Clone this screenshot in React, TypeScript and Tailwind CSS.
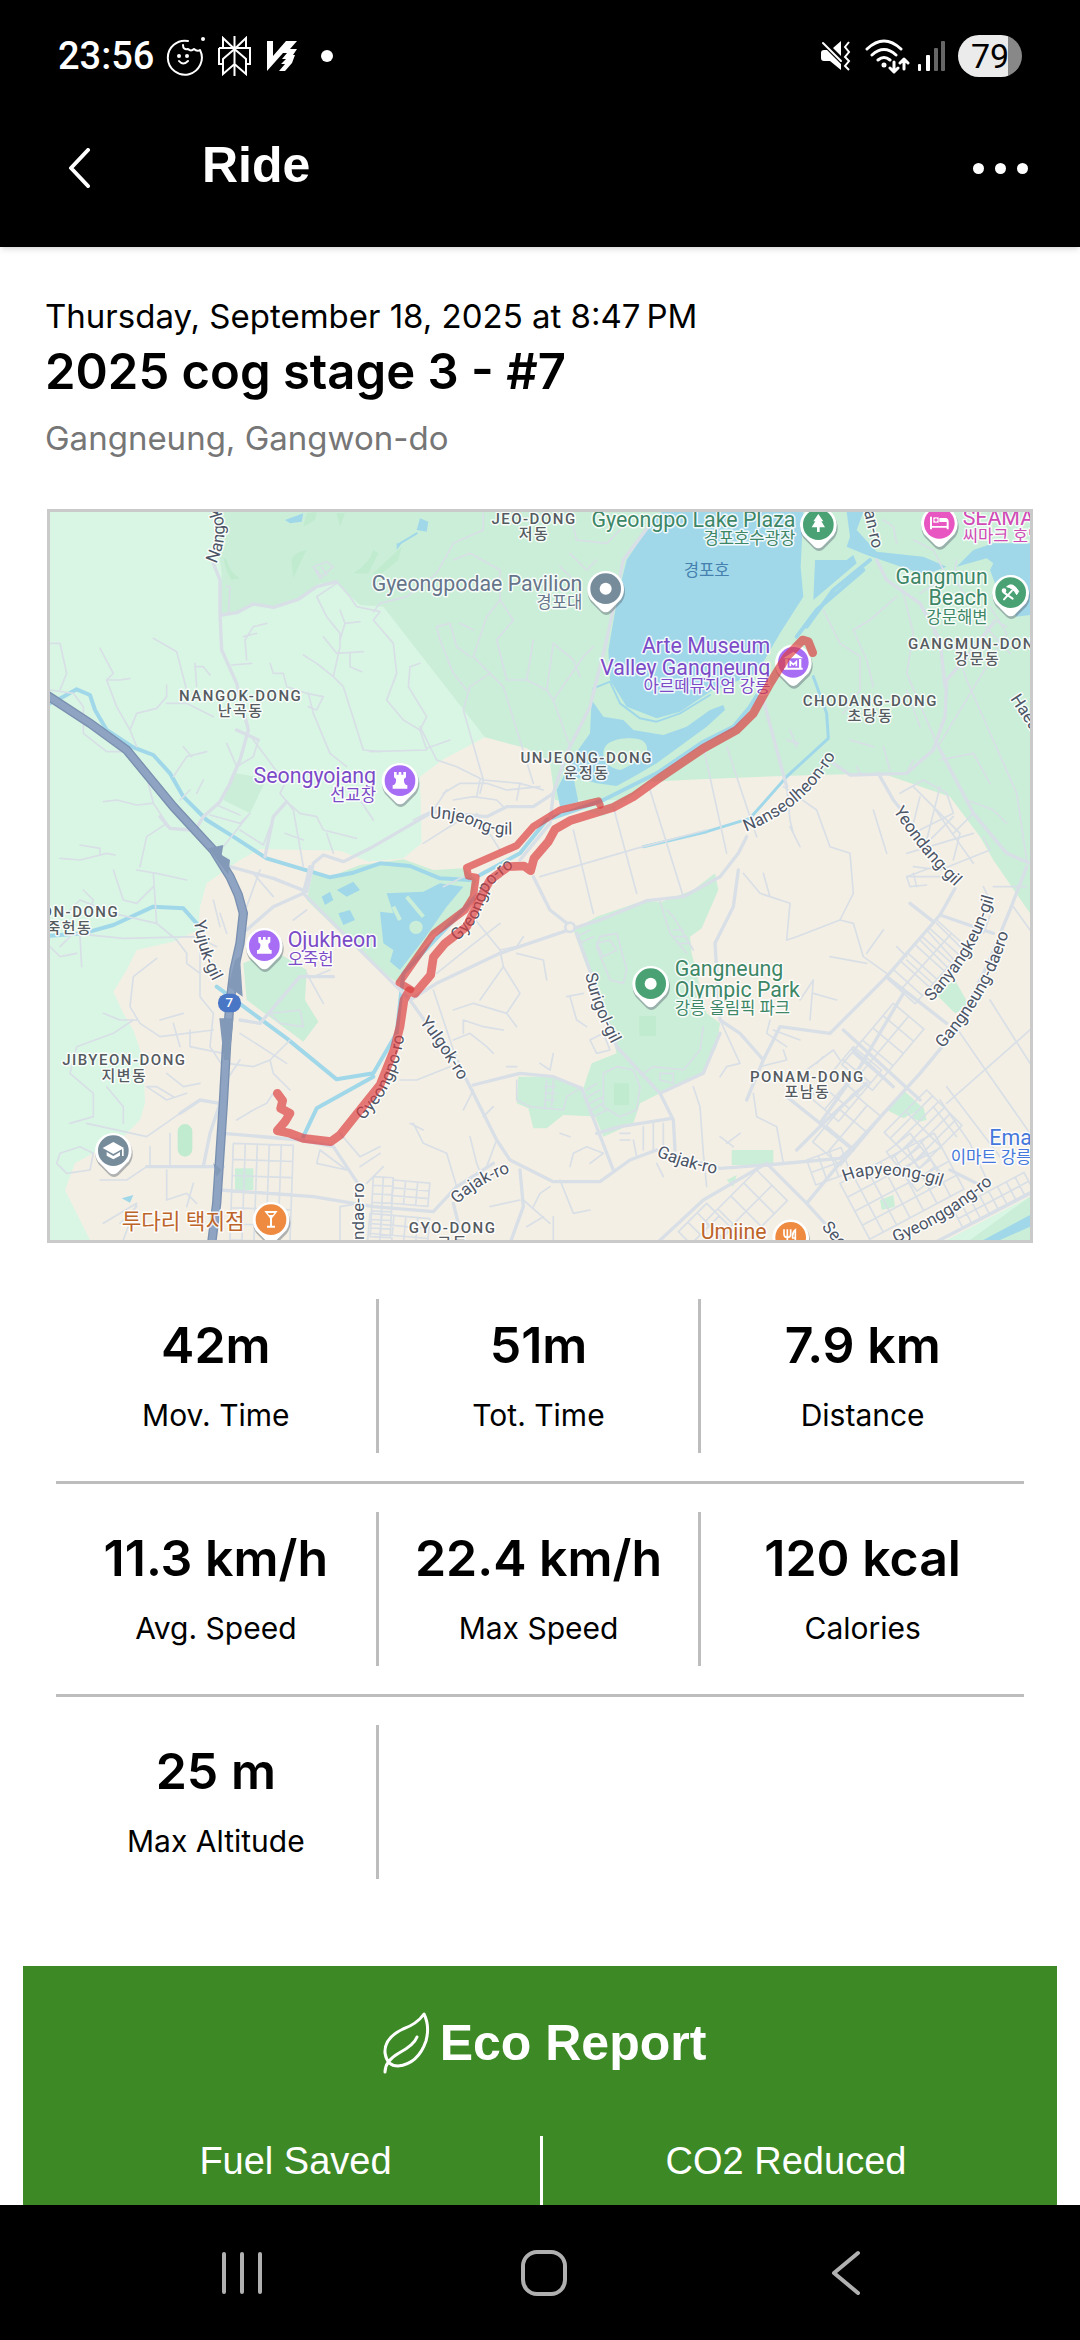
import type { ReactNode } from 'react'

const STATS = [
  [
    { value: '42m', label: 'Mov. Time' },
    { value: '51m', label: 'Tot. Time' },
    { value: '7.9 km', label: 'Distance' },
  ],
  [
    { value: '11.3 km/h', label: 'Avg. Speed' },
    { value: '22.4 km/h', label: 'Max Speed' },
    { value: '120 kcal', label: 'Calories' },
  ],
  [{ value: '25 m', label: 'Max Altitude' }],
]

// ---------- map data (map units) ----------

const ROUTE_OUT =
  'M712 1780L728 1802 722 1825 750 1840 735 1865 712 1892 750 1900 790 1915 872 1925 900 1905 1020 1755 1062 1650 1080 1580 1092 1500 1108 1472 1125 1480 1172 1425 1180 1372 1215 1330 1280 1280 1318 1200 1350 1140 1405 1100 1452 1098 1472 1112 1482 1075 1525 1025 1545 988 1590 962 1720 922 1780 890 1850 840 1990 745 2090 690 2140 640 2190 550 2240 470 2288 420 2305 425 2318 458'
const ROUTE_BACK =
  'M1680 915L1675 903 1560 930 1480 980 1430 1037 1280 1103 1285 1128 1308 1132 1300 1190 1275 1230 1180 1302 1078 1448 1112 1468'

const HIGHWAY =
  'M20 585L150 670 260 750 400 920 520 1050 570 1130 595 1185 610 1240 600 1330 582 1410 570 1510 560 1630 550 1810 540 1960 530 2110 515 2230'

const MAJOR_ROADS = [
  'M520 190L540 240 540 345 545 450 590 550 625 690 600 780 570 850 540 905 490 950 460 1000',
  'M545 345L590 338 640 312 700 322 775 298 830 260 890 245',
  'M360 950L390 985 450 990M590 690L655 720M675 1070L700 950 740 905',
  'M570 1100L700 1135 800 1175 820 1090 850 1065 910 1085 990 1045 1180 935',
  'M1840 60L1750 180 1700 420 1650 620 1580 760 1540 880 1530 970 1440 1080',
  'M1180 935L1340 950 1400 920 1480 920 1540 880',
  'M1480 1130L1530 1230 1600 1285 1380 1360 1190 1450 1110 1500',
  'M1600 1285L1680 1260 1820 1202 1930 1190 2040 1130 2095 1060 2120 1010',
  'M1610 1300L1730 1640 1860 1780 1900 1860 1905 1950',
  'M1110 1500L1280 1740 1370 1920 1410 1980 1540 2045 1680 2045 1770 1980 1850 1950 2040 2005 2180 1995 2400 1975 2440 1940',
  'M1300 1755L1440 1720 1540 1730 1625 1765 1720 2010M1670 1900L1740 1880 1895 1855M1860 1780L1990 1720 2040 1600',
  'M2170 600L2240 860M2380 790L2430 825 2600 820 2680 750 2715 650 2720 540 2790 460 2860 370',
  'M2510 180L2540 240 2640 310 2700 420 2715 560M2515 820L2560 900 2600 950M2690 730L2800 940 2900 1060 2970 1090',
  'M2095 1110L2080 1220 2025 1330 2040 1560 2100 1600 2170 1680 2120 1800M2170 1680L2220 1580 2370 1600 2540 1430 2700 1245 2745 1165',
  'M2540 1430L2720 1570M2410 1590L2640 1800M2340 1870L2460 1700 2590 1480M2240 1790L2440 1950M2440 1650L2560 1760',
  'M2440 1940L2640 1720 2740 1600 2840 1400 2910 1230 2960 1100M2270 1950L2360 1860 2480 1750',
  'M1850 2230L1990 2100 2180 1990 2300 2110 2400 2220M2300 2110L2440 1940M2610 1210L2680 1265M2700 1245L2860 1300',
  'M790 1180L700 1220 620 1290M810 1100L790 1180 1010 1400 1100 1490M600 1560L660 1570 780 1430 880 1430',
  'M550 1900L780 1920 880 1940 960 2060M320 2000L550 2000M540 2070L820 2090 1000 2120 1180 2135 1250 2060 1360 1990',
  'M490 2000L510 1900 540 1810 480 1800 420 1840M1440 2010L1450 2120 1410 2230M1240 2110L1260 2190',
  'M2680 2230L2970 2080M2730 2010L2830 2060',
]

const MINOR_ROADS = [
  'M30 430L60 430 80 520 60 570M180 445L220 520 200 540 240 540 270 535M200 540L230 620 270 690 290 740M270 690L290 640 350 625 380 590 380 555',
  'M340 415L410 455 440 570M465 490L470 560M465 500L490 500 510 525M380 610L440 610 520 650M30 570L100 580 130 620 130 700 200 755 260 755',
  'M560 260L570 260 565 340M575 495L635 490M620 480L615 420 640 380 680 370M610 410L650 400M690 490L700 520 730 520 740 560 800 580 850 590 830 630 805 620',
  'M890 250L830 290 860 350 900 400 900 440 880 530 910 560 970 750 1020 755M850 410L890 460 970 455M790 465L830 490 880 530M900 330L915 370 960 365M915 370L900 420',
  'M805 580L820 640 870 760 920 800M930 460L930 500 965 515M640 720L700 800 735 850 720 880 760 930 790 1100M590 800L640 770 655 720M560 730L590 800 570 840',
  'M400 830L440 770 500 755M430 740L455 770M190 905L230 900 290 915 335 910M320 830L340 910 380 970 320 1010 300 1100M60 1075L120 1080 200 1060 225 1065M120 1035L180 1045 180 1060',
  'M420 900L450 870M470 880L490 840M510 945L600 970 630 940 550 1040M530 915L600 945M600 990L670 1035 690 980',
  'M740 905L780 940 830 950 850 990 950 1015M860 1000L880 1060M735 1000L790 1020M1000 960L960 900',
  'M890 245L930 290 950 320 1020 335 1000 360 1060 430 1070 520 1040 600 1090 660 1140 690 1160 650 1105 560 1110 500 1140 490',
  'M1140 680L1190 780 1250 800 1330 840 1440 850 1510 870M1140 690L1160 750 990 755M1160 745L1230 720M1270 630L1330 840 1320 880M1270 630L1290 560 1350 520 1390 560 1480 850',
  'M1000 335L1020 310 1100 290 1190 220 1240 130 1330 90 1330 40M1240 180L1290 160 1380 210 1380 300 1340 350 1300 470 1350 520M1190 380L1230 370 1250 440 1290 470M1380 300L1420 360 1370 420 1400 540 1460 540 1520 570 1540 600 1590 740',
  'M1190 380L1200 420 1240 520 1280 570M1460 540L1480 420M1540 600L1630 470 1660 440M1520 570L1540 430 1600 480 1620 530M1590 160L1640 210 1670 180M1590 40L1610 120 1700 130 1750 80M1260 370L1300 390M1600 240L1560 200',
  'M1210 880L1260 850 1340 850 1400 870 1500 860M1240 900L1300 890 1370 900 1390 920M1320 840L1310 890M1440 850L1430 900M1220 870L1180 930 1120 960M1310 940L1380 1050M1150 1030L1260 960',
  'M1830 870L1930 1190M1720 920L1790 1180M1600 990L1660 1240M1990 740L2060 1060M2060 740L2150 1010M2230 860L2330 930 2370 1040 2430 1060 2440 1180 2400 1260 2270 1310 2240 1320',
  'M1500 1130L1790 1045 2000 990M2250 980L2280 1040M2240 860L2250 960 2260 1000M2350 330L2400 430 2460 470 2460 570 2410 640M2570 290L2490 360 2440 390 2480 480 2500 560M2590 280L2620 400 2600 520 2690 730',
  'M2620 120L2680 150 2720 230 2640 280M2750 180L2740 230 2790 310M2530 60L2560 80 2570 130M2680 400L2750 450 2780 540 2930 880 2960 1080M2800 340L2910 460M2850 320L2900 400 2700 730M2860 360L2900 380',
  'M2700 780L2800 760 2850 850M2600 820L2620 780M2530 740L2550 810M2450 800L2460 820M2430 720L2500 740M2600 570L2640 680M2150 560L2190 660M2260 720L2270 740',
  'M2580 880L2650 840 2720 880 2740 940 2620 1000 2650 1040 2740 950M2620 860L2760 1000 2740 1080M2600 1060L2800 1000M2680 920L2800 1090M2620 1100L2700 1110 2850 1050 2830 1010M2600 1130L2680 1100M2780 900L2860 930 2900 970M2640 890L2620 970M2700 860L2660 1020M2800 940L2740 1000',
  'M2500 930L2540 1060M2110 1120L2160 1180 2250 1210 2240 1320M2170 1120L2190 1190M2400 1260L2440 1270 2470 1370 2540 1420M2370 1370L2480 1390M2480 1360L2530 1290M2280 1500L2320 1440 2310 1560M2320 1480L2390 1500M2570 1340L2600 1370',
  'M2640 1320L2740 1420M2660 1290L2760 1400M2690 1270L2790 1370M2600 1380L2700 1470M2730 1130L2600 1130 2610 1160 2660 1155M2620 1120L2630 1160M2860 1160L2960 1160M2920 1220L2970 1290M2830 1160L2860 1220 2830 1300',
  'M2740 1570L2830 1700 2970 1900M2850 1500L2970 1690M2720 1810L2970 1590M2720 1760L2880 1970M2700 1800L2790 1930 2850 2060M2680 1820L2750 1910',
  'M80 1240L120 1200 220 1240 350 1270 410 1320 440 1360 440 1390 480 1420M130 1170L160 1200 150 1230M220 1110L250 1200 290 1210 340 1160M290 1110L350 1120 440 1140M340 1120L350 1270M60 1340L100 1300 250 1315 470 1310 530 1340M120 1310L125 1400',
  'M30 1340L60 1370 110 1360M350 1375L280 1430 270 1520 300 1570 360 1610 520 1590M280 1560L220 1600 110 1640 90 1720 160 1780 160 1850 90 1870M190 1540L240 1560 290 1560M480 1270L480 1490 520 1540M400 1570L420 1640M360 1560L430 1540M450 1590L450 1640 550 1660',
  'M320 1760L380 1800 440 1780M320 1760L350 1760 400 1790M380 1720L430 1760 480 1750M200 1760L250 1820 250 1870M140 1870L320 1910 420 1840M590 1860L640 1830 680 1810 700 1780M560 1690L640 1700 690 1680 750 1620M690 1680L700 1720 750 1770M600 1680L560 1740M600 1600L740 1690',
  'M620 1220L660 1110M700 1190L640 1120M760 1260L800 1230M540 1240L560 1300M520 1200L540 1280M520 1540L510 1640 550 1700M690 1540L780 1530 790 1580 720 1570 690 1540M800 1420L850 1510M820 1430L870 1410',
  'M60 1960L120 1940 160 1960 150 2010 80 2020 50 1990 60 1960M330 1940L330 2000M390 1900L390 2000M180 2040L260 2040 320 2000M380 2010L380 2100M380 2100L440 2080 470 2110M190 2170L290 2110 250 2220M290 2120L240 2170M460 2050L440 2120',
  'M840 1950L920 2010 830 1990 840 1950M900 1900L960 1970 1020 1940M960 2000L1020 1960M980 2050L1030 2000M900 2220L900 2120 960 2110',
  'M1180 1470L1240 1650 1280 1740M1190 1420L1290 1340 1380 1270M1290 1240L1380 1350 1390 1400 1320 1500M1380 1350L1430 1340 1450 1310M1430 1360L1510 1380 1520 1440M1390 1400L1440 1480 1400 1540 1430 1580M1240 1530L1300 1510 1400 1540M1240 1620L1290 1600 1340 1640 1360 1660M1270 1600L1270 1560 1330 1580 1390 1590',
  'M1590 1490L1610 1560 1640 1580M1580 1490L1630 1480M1650 1620L1690 1600 1710 1650 1670 1660 1650 1620M1540 1660L1530 1710 1500 1690M1080 1740L1130 1740 1230 1700M1120 1870L1150 1930 1220 1960 1250 2060M1290 1910L1310 1990 1330 2040M1110 1870L1150 1890M1370 1920L1340 2000',
  'M1560 1900L1590 1910M1400 1700L1430 1700M1270 1830L1300 1770M1330 1850L1360 1820M1560 2040L1600 2140 1650 2130M1590 2000L1600 1960 1640 1940 1690 1960 1650 1990M1450 2100L1530 2170M1480 2120L1500 2080 1530 2060M1460 2180L1510 2150M1540 2150L1540 2220M1350 2120L1440 2100',
  'M1960 1760L1980 1820 1990 1960 2000 2060M1850 1990L1870 2030M1780 1920L1790 1970M1840 1870L1840 1950M1810 1880L1810 1950M1870 1870L1870 1950M1740 1900L1770 1900M1740 1920L1770 1920',
  'M2040 1560L2100 1690 2060 1700 2040 1730M2190 1560L2180 1600 2240 1640M2160 1700L2240 1680 2230 1650M2140 1780L2150 1850 2210 1880 2230 1990M2040 1910L2080 1940M2060 1930L2100 1900M2300 1710L2380 1650 2400 1680M2330 1690L2350 1670M2200 1590L2280 1620',
]

// park paths and car parks inside the green areas
const PARK_PATHS = [
  'M1680 1310L1730 1300 1760 1410 1750 1450 1710 1440 1670 1340ZM1670 1330L1710 1320 1730 1350 1690 1370Z',
  'M1860 1205L1890 1300 1940 1360M1880 1230L1900 1250 1960 1350M1900 1290L1930 1290M1905 1310L1940 1310M1912 1330L1950 1330',
  'M1690 1720L1730 1700 1780 1710 1800 1760 1790 1830 1740 1850 1690 1820ZM1640 1770L1670 1750M1645 1790L1680 1770M1650 1810L1690 1790M1655 1830L1690 1810M1660 1850L1700 1830',
  'M1430 1740L1430 1800 1470 1820 1570 1830M1570 1830L1580 1790 1620 1765M1520 1740L1515 1820M1540 1740L1535 1820M1515 1760L1545 1760M1515 1780L1545 1780M1515 1800L1545 1800',
  'M1810 1720L1840 1700 1930 1710 1980 1650 1990 1580M1860 1720L1900 1720 1900 1750 1860 1740ZM2250 690L2270 740M2240 720L2275 730M820 200L860 185 880 200 840 235ZM830 210L845 230M845 200L860 225',
  'M1210 1160L1270 1130M1600 1290L1640 1270M1610 1310L1650 1290M1620 1330L1660 1310',
]

// dense street grids: origin, size, cell counts and rotation in degrees
const BLOCKS = [
  { x: 580, y: 1930, w: 180, h: 290, cols: 5, rows: 6, angle: 2 },
  { x: 1000, y: 2030, w: 60, h: 180, cols: 2, rows: 7, angle: 3 },
  { x: 1060, y: 2040, w: 110, h: 70, cols: 3, rows: 3, angle: 5 },
  { x: 990, y: 2140, w: 180, h: 90, cols: 5, rows: 3, angle: 5 },
  { x: 2690, y: 1260, w: 120, h: 230, cols: 2, rows: 7, angle: 42 },
  { x: 2560, y: 1510, w: 120, h: 240, cols: 2, rows: 5, angle: 40 },
  { x: 2440, y: 1640, w: 110, h: 200, cols: 2, rows: 4, angle: 40 },
  { x: 2440, y: 1780, w: 110, h: 190, cols: 2, rows: 3, angle: 40 },
  { x: 2660, y: 1770, w: 150, h: 180, cols: 6, rows: 2, angle: 45 },
  { x: 2610, y: 1900, w: 150, h: 90, cols: 6, rows: 1, angle: 52 },
  { x: 2400, y: 2050, w: 320, h: 190, cols: 7, rows: 4, angle: -28 },
  { x: 2150, y: 2010, w: 130, h: 220, cols: 2, rows: 4, angle: 45 },
  { x: 2000, y: 2110, w: 160, h: 120, cols: 3, rows: 3, angle: 45 },
  { x: 2300, y: 1980, w: 110, h: 80, cols: 3, rows: 2, angle: -20 },
  { x: 2740, y: 2130, w: 240, h: 60, cols: 8, rows: 2, angle: -28 },
]

type Poi = { lines: string[]; local: string; x: number; y: number; anchor: 'start' | 'end'; color: string }

const POIS: Poi[] = [
  { lines: ['Gyeongpo Lake Plaza'], local: '경포호수광장', x: 2266, y: 80, anchor: 'end', color: '#3d8767' },
  { lines: ['Gyeongpodae Pavilion'], local: '경포대', x: 1627, y: 272, anchor: 'end', color: '#66758a' },
  { lines: ['SEAMARQ'], local: '씨마크 호텔', x: 2768, y: 75, anchor: 'start', color: '#d04bb5' },
  { lines: ['Gangmun', 'Beach'], local: '강문해변', x: 2843, y: 252, anchor: 'end', color: '#3d8767' },
  { lines: ['Arte Museum', 'Valley Gangneung'], local: '아르떼뮤지엄 강릉', x: 2191, y: 460, anchor: 'end', color: '#7b4bc8' },
  { lines: ['Seongyojang'], local: '선교장', x: 1008, y: 850, anchor: 'end', color: '#7b4bc8' },
  { lines: ['Ojukheon'], local: '오죽헌', x: 743, y: 1342, anchor: 'start', color: '#7b4bc8' },
  { lines: ['Gangneung', 'Olympic Park'], local: '강릉 올림픽 파크', x: 1904, y: 1427, anchor: 'start', color: '#3d8767' },
]

const DISTRICTS = [
  { name: 'JEO-DONG', local: '저동', x: 1482, y: 71 },
  { name: 'NANGOK-DONG', local: '난곡동', x: 602, y: 602 },
  { name: 'UNJEONG-DONG', local: '운정동', x: 1640, y: 788 },
  { name: 'CHODANG-DONG', local: '초당동', x: 2491, y: 618 },
  { name: 'GANGMUN-DONG', local: '강문동', x: 2812, y: 446 },
  { name: 'HEON-DONG', local: '죽헌동', x: 88, y: 1252 },
  { name: 'JIBYEON-DONG', local: '지변동', x: 253, y: 1696 },
  { name: 'PONAM-DONG', local: '포남동', x: 2302, y: 1746 },
  { name: 'GYO-DONG', local: '교동', x: 1238, y: 2198 },
]

const STREETS = [
  { id: 'nangok', name: 'Nangok-gil', d: 'M528 192Q562 120 550 60Q540 10 500 -80' },
  { id: 'haean', name: 'an-ro', d: 'M2472 34L2502 170' },
  { id: 'haes', name: 'Haean-ro', d: 'M2910 596L3030 780' },
  { id: 'unjeong', name: 'Unjeong-gil', d: 'M1170 956Q1240 955 1290 975Q1350 1010 1440 1002' },
  { id: 'nanseol', name: 'Nanseolheon-ro', d: 'M2118 995Q2290 930 2385 770L2420 700' },
  { id: 'yeondang', name: 'Yeondang-gil', d: 'M2560 932Q2650 1080 2800 1210' },
  { id: 'yujuk', name: 'Yujuk-gil', d: 'M462 1262Q475 1380 545 1490' },
  { id: 'gyeongpo1', name: 'Gyeongpo-ro', d: 'M1250 1324Q1322 1270 1340 1180Q1370 1125 1460 1080' },
  { id: 'gyeongpo2', name: 'Gyeongpo-ro', d: 'M968 1862Q1085 1750 1096 1570' },
  { id: 'surigol', name: 'Surigol-gil', d: 'M1636 1422Q1655 1530 1740 1680' },
  { id: 'yulgok', name: 'Yulgok-ro', d: 'M1138 1566Q1200 1640 1280 1780' },
  { id: 'gajak1', name: 'Gajak-ro', d: 'M1252 2114Q1310 2050 1430 2010' },
  { id: 'gajak2', name: 'Gajak-ro', d: 'M1848 1968Q1930 2005 2060 2028' },
  { id: 'ndae', name: 'ndae-ro', d: 'M973 2220L973 2000' },
  { id: 'sanyang', name: 'Sanyangkeun-gil', d: 'M2674 1506Q2830 1350 2872 1150' },
  { id: 'daero', name: 'Gangneung-daero', d: 'M2708 1646Q2876 1460 2920 1240' },
  { id: 'hapyeong', name: 'Hapyeong-gil', d: 'M2414 2046Q2540 1990 2760 2080' },
  { id: 'gyeonggang', name: 'Gyeonggang-ro', d: 'M2566 2228Q2740 2160 2890 2022' },
  { id: 'seobu', name: 'Seobu-ro', d: 'M2344 2182L2460 2320' },
]

// ---------- map pieces ----------

function Grid({ x, y, w, h, cols, rows, angle }: (typeof BLOCKS)[number]) {
  const d = [
    ...Array.from({ length: cols + 1 }, (_, i) => `M${(i * w) / cols} 0V${h}`),
    ...Array.from({ length: rows + 1 }, (_, i) => `M0 ${(i * h) / rows}H${w}`),
  ].join('')
  return <path d={d} transform={`translate(${x} ${y}) rotate(${angle})`} />
}

function Pin({ x, y, color, children }: { x: number; y: number; color: string; children?: ReactNode }) {
  return (
    <g transform={`translate(${x} ${y})`}>
      <path d="M-46 36A56 56 0 1 1 46 36L14 68Q0 80 -14 68Z" fill="#5b6673" opacity=".45" transform="translate(2 5)" />
      <path d="M-46 32A55 55 0 1 1 46 32L12 66Q0 76 -12 66Z" fill="#fff" />
      <circle r="46" fill={color} />
      {children}
    </g>
  )
}

function Castle() {
  return (
    <path
      d="M-18 -26V-10L-12 -5V2Q-12 8 -18 13H-22V24H22V13H18Q12 8 12 2V-5L18 -10V-26H10V-18H4V-26H-4V-18H-10V-26Z"
      fill="#fff"
    />
  )
}

function RouteMap() {
  return (
    <svg viewBox="30 36 2940 2184" className="block h-auto w-full" role="img" aria-label="Map of the ride">
      <rect x="30" y="36" width="2940" height="2184" fill="#d9f6e4" />

      {/* Land cover */}
      <path
        d="M520 36L545 220 540 345 590 338 640 312 700 322 775 298 840 250 890 250 960 315 1030 320 1335 712 1500 900 2000 900 2900 1140 2970 1250V36Z"
        fill="#cbeed8"
      />
      <path
        d="M600 1080L660 1047 900 1052 985 1085 1090 1075 1145 1030 1140 830 1210 778 1335 712 1460 745 1530 790 1545 900 1690 950 1830 845 1980 838 2230 828 2525 820 2730 890 2820 1010 2860 1080 2970 1240V2090L2720 2220H150L75 2070 105 1990 250 1910 300 1860 315 1810 310 1680 280 1590 250 1540 220 1475 260 1410 290 1350 400 1325 475 1290 480 1220 500 1150Z"
        fill="#f4efe4"
      />
      <path d="M585 820L680 835 630 940 550 900Z" fill="#cbeed8" />
      <path
        d="M820 1110L800 1200 1010 1405 1075 1450 1170 1310 1280 1230 1310 1140 1270 1105 1180 1110 1090 1078 960 1095 870 1130ZM610 1390L700 1350 800 1410 795 1500 835 1565 790 1625 620 1500Z"
        fill="#cbeed8"
      />
      <path
        d="M1600 1290L1670 1250 1810 1202 1865 1205 1960 1170 2025 1120 2035 1170 1985 1285 1950 1310 1955 1360 2000 1540 2040 1570 2030 1640 1985 1720 1860 1780 1800 1810 1780 1870 1690 1910 1630 1765 1655 1690 1730 1660 1690 1500 1640 1400ZM1435 1730L1550 1730 1625 1765 1685 1850 1570 1845 1520 1885 1480 1885 1465 1825 1430 1810Z"
        fill="#cbeed8"
      />
      <path
        d="M2685 1480L2745 1440 2790 1520 2745 1540ZM2540 1830L2590 1770 2650 1825 2590 1855ZM2610 1850L2650 1820 2660 1860 2640 1865ZM2075 1950H2200V1995H2075ZM585 2005H640V2070H585ZM2520 2100L2560 2085 2565 2120 2525 2130ZM2060 2040L2090 2025 2080 2060ZM2790 2220L2970 2090V2220Z"
        fill="#cbeed8"
      />
      <path
        d="M560 180Q570 220 600 235L575 240Q555 210 550 170ZM755 190Q750 160 800 150L775 200 760 235ZM800 40L790 80 825 60 830 36ZM940 220Q990 190 1000 150L1015 160 985 220ZM890 40L900 80 915 40ZM1000 220L1085 140 1075 180 1020 225ZM435 1872a22 22 0 0 1 22 22v54a22 22 0 0 1 -44 0v-54a22 22 0 0 1 22 -22ZM1798 1548h50v60h-50ZM1722 1750h45v65h-45Z"
        fill="#c0ebcf"
      />

      {/* Water */}
      <g fill="#a0d8ea">
        <path d="M1865 36L1810 105 1760 180 1735 280 1705 450 1710 540 1760 620 1850 655 1920 635 2010 575 2150 520 2220 400 2290 290 2282 200 2290 36Z" />
        <path d="M2325 180L2420 180 2440 165 2450 190 2320 300ZM2420 36L2430 110 2420 140 2480 165 2640 220 2680 215 2720 200 2650 170 2510 155 2450 90 2470 36ZM2750 200L2800 150 2860 130 2970 130V345L2930 350 2880 290 2850 210 2860 190 2840 175Z" />
        <path d="M1655 600L1690 650 1750 660 1780 690 1870 705 1940 680 2010 630 2050 615 2055 630 2000 680 1850 790 1790 825 1730 858 1670 850 1600 830 1615 905 1560 920 1550 870 1600 770 1650 700Z" />
        <path d="M1020 1235L1060 1240 1040 1180 1150 1175 1200 1150 1270 1160 1220 1220 1150 1320 1080 1410 1050 1385 1060 1350 1030 1330ZM890 1170L940 1145 960 1170 920 1190ZM845 1190L870 1175 880 1200 855 1215ZM895 1240L930 1230 945 1260 910 1275Z" />
        <path d="M735 60L790 40 785 65 750 70ZM1140 55L1165 65 1160 95 1130 90ZM1070 130L1085 130 1070 150ZM245 2095L280 2085 270 2108Z" />
        <path d="M2830 2220L2970 2145V2180L2880 2220Z" />
      </g>
      <path d="M1690 760Q1690 720 1760 715Q1830 710 1820 760Q1770 800 1740 810Q1690 800 1690 760Z" fill="#cbeed8" />
      <g fill="none" stroke="#cbeed8" strokeWidth="12">
        <path d="M1100 1190L1150 1250M1060 1220L1080 1260M2320 160L2310 300 2260 400" />
        <circle cx="1128" cy="1282" r="14" fill="#cbeed8" />
      </g>
      <g fill="none" stroke="#a0d8ea" strokeWidth="12" strokeLinejoin="round" strokeLinecap="round">
        <path d="M30 610L70 590 110 568 150 585 165 630 200 690 280 742 340 765 390 820 430 890 500 960 580 1010 680 1075 780 1105 870 1132 940 1118 1020 1090 1110 1098 1200 1135 1290 1140" />
        <path d="M1320 1125L1440 1060 1520 960 1690 900 1850 820 1990 725 2080 680 2130 620 2180 540M1400 1090L1260 1240 1090 1420 1070 1600 1000 1720 890 1738 740 1615 530 1460M1000 1730L830 1825 790 1910M30 1307L130 1300 220 1275 340 1220 430 1225 470 1270" />
        <path d="M1810 1040L2000 995 2130 955 2240 830 2365 715 2360 640 2320 530" strokeWidth="9" />
        <path d="M2470 210L2330 330 2270 410M2490 180L2380 270 2300 380" />
        <path d="M1660 565L1710 545 1740 610 1800 655 1850 665 1920 640 2010 585M1130 100L1080 130" strokeWidth="6" />
      </g>

      {/* Roads */}
      <g fill="none" stroke="#d8dfe6" strokeLinejoin="round" strokeLinecap="round">
        <g strokeWidth="5">
          {MINOR_ROADS.map(d => <path key={d} d={d} />)}
          {PARK_PATHS.map(d => <path key={d} d={d} />)}
          {BLOCKS.map(b => <Grid key={`${b.x}-${b.y}`} {...b} />)}
        </g>
        <g strokeWidth="10">
          {MAJOR_ROADS.map(d => <path key={d} d={d} />)}
        </g>
        <circle cx="1590" cy="1282" r="14" strokeWidth="8" fill="#f4efe4" />
      </g>
      <path d={HIGHWAY} fill="none" stroke="#7a90b0" strokeWidth="28" />
      <path d={HIGHWAY} fill="none" stroke="#8ea4c2" strokeWidth="20" />
      <path
        d="M505 1045L550 1035 545 1065 570 1080 565 1125ZM565 1460L585 1380 600 1370 608 1490ZM538 1555H580L568 1680H552ZM520 1990L545 2010 530 2030Z"
        fill="#8399b8"
      />

      {/* Labels */}
      <g stroke="#fff" strokeOpacity=".85" strokeWidth="9" strokeLinejoin="round" className="[font-family:Roboto,'Noto_Sans_CJK_KR',sans-serif] [paint-order:stroke]">
        {STREETS.map(s => (
          <g key={s.id}>
            <path id={s.id} d={s.d} fill="none" stroke="none" />
            <text fill="#4c5566" className="text-[51px]">
              <textPath href={`#${s.id}`}>{s.name}</textPath>
            </text>
          </g>
        ))}
        {DISTRICTS.map(d => (
          <g key={d.name} fill="#555b61" textAnchor="middle">
            <text x={d.x} y={d.y} className="text-[45px] font-medium tracking-widest">{d.name}</text>
            <text x={d.x} y={d.y + 46} className="text-[45px] font-medium tracking-widest">{d.local}</text>
          </g>
        ))}
        {POIS.map(p => (
          <g key={p.local} fill={p.color} textAnchor={p.anchor}>
            {p.lines.map((line, i) => (
              <text key={line} x={p.x} y={p.y + i * 64} className="text-[64px]">{line}</text>
            ))}
            <text x={p.x} y={p.y + p.lines.length * 64 - 12} className="text-[50px]">{p.local}</text>
          </g>
        ))}
        <text x="2000" y="228" textAnchor="middle" fill="#4580ae" stroke="none" className="text-[50px]">경포호</text>
        <text x="2848" y="1936" fill="#4478dc" className="text-[64px]">Emart</text>
        <text x="2732" y="1990" fill="#4478dc" className="text-[50px]">이마트 강릉점</text>
        <text x="2180" y="2216" textAnchor="end" fill="#bd6429" className="text-[64px]">Umjine</text>
        <text x="614" y="2188" textAnchor="end" fill="#bd6429" className="text-[64px]">투다리 택지점</text>
      </g>

      <rect x="534" y="1481" width="69" height="56" rx="27" fill="#4a76c6" />
      <text x="568" y="1522" textAnchor="middle" fill="#fff" className="text-[40px] font-medium [font-family:Roboto,sans-serif]">7</text>

      {/* Pins */}
      <Pin x={1697} y={266} color="#778c9b"><circle r="18" fill="#fff" /></Pin>
      <Pin x={1832} y={1451} color="#4aa173"><circle r="18" fill="#fff" /></Pin>
      <Pin x={1080} y={842} color="#a86df5"><Castle /></Pin>
      <Pin x={673} y={1337} color="#a86df5"><Castle /></Pin>
      <Pin x={2335} y={74} color="#4aa173">
        <path d="M0 -32L15 -10H9L20 8H4V22H-4V8H-20L-9 -10H-15Z" fill="#fff" />
      </Pin>
      <Pin x={2698} y={70} color="#e756c1">
        <path d="M-28 -20H-22V8H22V-4H28V18H22V13H-22V18H-28ZM0 -16H20Q28 -14 28 -4H0Z" fill="#fff" />
        <path d="M-18 -18H-2V-2H-18Z" fill="#fff" />
        <path d="M-10 -15V-5M-15 -10H-5" stroke="#e756c1" strokeWidth="4" />
      </Pin>
      <Pin x={2912} y={278} color="#4aa173">
        <path d="M-12 -18Q6 -34 24 -4L18 6Q8 -14 -12 -18Z" fill="#fff" stroke="#fff" strokeWidth="3" strokeLinejoin="round" />
        <path d="M4 -6L-20 20M-20 0L6 18" fill="none" stroke="#fff" strokeWidth="6" strokeLinecap="round" />
        <circle cx="-20" cy="-6" r="7" fill="#fff" />
      </Pin>
      <Pin x={2260} y={487} color="#a86df5">
        <path d="M0 -32L30 -12H-30ZM-24 -10H-17V16H-24ZM17 -10H24V16H17ZM-28 16H28V22H-28Z" fill="#fff" />
        <path d="M-9 12V-2L0 7 9 -2V12" fill="none" stroke="#fff" strokeWidth="5" />
      </Pin>
      <Pin x={220} y={1952} color="#778c9b">
        <path d="M0 -26L32 -8 0 10 -32 -8ZM-20 4L0 16 20 4V15L0 26 -20 15ZM26 -6H31V16H26Z" fill="#fff" />
      </Pin>
      <Pin x={693} y={2159} color="#ee8b41">
        <path d="M-20 -26H20L3 -4V18H12V24H-12V18H-3V-4Z" fill="#fff" />
        <path d="M-10 -20H10L6 -14H-6Z" fill="#ee8b41" />
      </Pin>
      <Pin x={2252} y={2212} color="#ee8b41">
        <path d="M-20 -24V-10Q-20 0 -10 0T0 -10V-24M-10 -24V24M14 24V-22Q4 -14 6 2H14" fill="none" stroke="#fff" strokeWidth="5" />
      </Pin>

      {/* Recorded track */}
      <g fill="none" stroke="#dc3c3e" strokeOpacity=".68" strokeWidth="26" strokeLinejoin="round" strokeLinecap="round">
        <path d={ROUTE_OUT} />
        <path d={ROUTE_BACK} strokeWidth="22" />
      </g>
    </svg>
  )
}

// ---------- screen ----------

function StatusBar() {
  return (
    <div className="flex h-28 items-center justify-between pr-[58px] pl-[58px]">
      <div className="flex items-center gap-3">
        <span className="text-[38px] leading-none font-medium [font-family:Roboto,sans-serif]">23:56</span>
        <svg width="40" height="42" viewBox="0 0 40 42" fill="none" stroke="#fff" strokeWidth="2" strokeLinecap="round" strokeLinejoin="round">
          <path d="M22 6A17 17 0 1 0 34 15Q31 17 28 14Q25 17 22 14Q17 15 17 10" />
          <path d="M13 26Q17 31 22 26" />
          <circle cx="13" cy="21" r="1" fill="#fff" />
          <circle cx="21" cy="21" r="1" fill="#fff" />
          <circle cx="37" cy="4" r="2" fill="#fff" stroke="none" />
        </svg>
        <svg width="33" height="40" viewBox="0 0 33 40" fill="none" stroke="#fff" strokeWidth="2">
          <path d="M16.500 0V40M5 12V2L16.500 13 28 2V12M1 12H32V28H28M5 28H1V12M16.500 13L5 23V38L16.500 28 28 38V23L16.500 13" />
        </svg>
        <svg width="30" height="30" viewBox="0 0 30 30" fill="#fff" className="ml-1">
          <path d="M0 0H6V15L19 0H30L23 8H30L26 14H28L25 22 18 30H12L18 23H14L19 18H15L20 12H16L0 30Z" />
        </svg>
        <span className="ml-3 h-3 w-3 rounded-full bg-white" />
      </div>
      <div className="flex items-center">
        <svg width="30" height="30" viewBox="0 0 30 30" fill="#fff">
          <path d="M0 12Q0 9 3 9H6L20 23V29L9 20H3Q0 20 0 17ZM12 7L20 0V15Z" />
          <path d="M2 2L20 20" stroke="#fff" strokeWidth="2" strokeLinecap="round" />
          <path d="M28 1L24 6 28 11 24 16 28 20 24 25 28 29" fill="none" stroke="#fff" strokeWidth="2" />
        </svg>
        <svg width="45" height="35" viewBox="0 0 45 35" fill="none" stroke="#fff" strokeWidth="3" strokeLinecap="round" strokeLinejoin="round" className="ml-3.5">
          <path d="M2 10Q19 -6 36 10M7 16Q19 5 31 16M13 21Q19 16 25 21" />
          <circle cx="19" cy="26" r="1" fill="#fff" />
          <path d="M29 23V33M25 29L29 33 33 29M39 30V20M35 24L39 20 43 24" />
        </svg>
        <svg width="28" height="30" viewBox="0 0 28 30" fill="#fff" className="ml-2">
          <rect y="23" width="3" height="7" rx="1" />
          <rect x="8" y="14" width="4" height="16" rx="1" />
          <rect x="16" y="7" width="4" height="23" rx="1" fill="#666" />
          <rect x="23" width="4" height="30" rx="1" fill="#666" />
        </svg>
        <div className="ml-3 flex h-[42px] w-16 items-center justify-center rounded-full bg-linear-to-r from-[#ebebeb] from-78% to-[#888] to-78% text-[34px] leading-none text-black [font-family:Roboto,sans-serif]">
          79
        </div>
      </div>
    </div>
  )
}

function AppBar() {
  return (
    <div className="flex h-28 items-center pr-[52px] pl-[62px]">
      <button aria-label="Back" className="flex h-14 w-9 items-center justify-center">
        <svg width="24" height="40" viewBox="0 0 24 40" fill="none" stroke="#fff" strokeWidth="4" strokeLinecap="round" strokeLinejoin="round">
          <path d="M20 2L3 20 20 38" />
        </svg>
      </button>
      <h1 className="ml-[104px] pb-1.5 text-[50px] leading-none font-bold">Ride</h1>
      <button aria-label="More options" className="ml-auto flex h-14 items-center gap-[11px]">
        <span className="h-[11px] w-[11px] rounded-full bg-white" />
        <span className="h-[11px] w-[11px] rounded-full bg-white" />
        <span className="h-[11px] w-[11px] rounded-full bg-white" />
      </button>
    </div>
  )
}

function EcoReport() {
  return (
    <section className="mx-[23px] mt-[59px] flex flex-1 flex-col bg-[#3c8926] pt-[46px] text-white [font-family:'Liberation_Sans',sans-serif]">
      <div className="flex items-center justify-center gap-2.5 pl-2">
        <svg width="48" height="62" viewBox="0 0 48 62" fill="none" stroke="#fff" strokeWidth="3" strokeLinecap="round" strokeLinejoin="round">
          <path d="M42 2Q35 12 21 17Q2 26 3 41Q5 54 16 54Q36 52 44 29Q48 14 42 2Z" />
          <path d="M35 25Q32 33 17 41Q3 49 3 60" />
        </svg>
        <h3 className="text-[50px] leading-[60px] font-bold">Eco Report</h3>
      </div>
      <div className="mt-[62px] grid flex-1 grid-cols-2 px-7 text-center text-[38px] leading-[50px]">
        <div>Fuel Saved</div>
        <div className="border-l-[3px] border-white">CO2 Reduced</div>
      </div>
    </section>
  )
}

function NavBar() {
  return (
    <nav className="flex h-[135px] items-center justify-center gap-[222px] bg-black pl-2">
      <button aria-label="Recent apps" className="flex h-20 w-20 items-center justify-center gap-3.5">
        <span className="h-[42px] w-1 rounded-full bg-[#b0b0b0]" />
        <span className="h-[42px] w-1 rounded-full bg-[#b0b0b0]" />
        <span className="h-[42px] w-1 rounded-full bg-[#b0b0b0]" />
      </button>
      <button aria-label="Home" className="flex h-20 w-20 items-center justify-center">
        <span className="h-[46px] w-[46px] rounded-2xl border-4 border-[#b0b0b0]" />
      </button>
      <button aria-label="Back" className="flex h-20 w-20 items-center justify-center">
        <svg width="30" height="46" viewBox="0 0 30 46" fill="none" stroke="#b0b0b0" strokeWidth="4" strokeLinecap="round" strokeLinejoin="round">
          <path d="M27 3L3 23 27 43" />
        </svg>
      </button>
    </nav>
  )
}

export default function App() {
  return (
    <div className="flex min-h-screen flex-col bg-white text-black [font-family:Inter,sans-serif]">
      <header className="relative z-10 bg-black pb-[23px] text-white shadow-md [font-family:'Liberation_Sans',sans-serif]">
        <StatusBar />
        <AppBar />
      </header>

      <main className="flex flex-1 flex-col">
        <div className="px-[45px] pt-[46px]">
          <p className="text-[33px] leading-[46px]">Thursday, September 18, 2025 at 8:47{'\u202f'}PM</p>
          <h2 className="text-[49px] leading-[66px] font-semibold">2025 cog stage 3 - #7</h2>
          <p className="text-[33px] leading-[66px] text-[#767676]">Gangneung, Gangwon-do</p>
        </div>

        <div className="mx-[47px] mt-[38px] border-[3px] border-[#cacaca]">
          <RouteMap />
        </div>

        {/* Stats */}
        <section className="mx-14 mt-7 divide-y-[3px] divide-[#bdbdbd]">
          {STATS.map(row => (
            <div key={row[0].label} className="grid grid-cols-3 py-7">
              {row.map((s, i) => (
                <div
                  key={s.label}
                  className={`h-[154px] pt-4 text-center ${i < 2 ? 'border-r-[3px] border-[#bdbdbd]' : ''}`}
                >
                  <p className="text-[50px] leading-[60px] font-semibold">{s.value}</p>
                  <p className="mt-5 text-[30px] leading-10">{s.label}</p>
                </div>
              ))}
            </div>
          ))}
        </section>

        <EcoReport />
      </main>

      <NavBar />
    </div>
  )
}
